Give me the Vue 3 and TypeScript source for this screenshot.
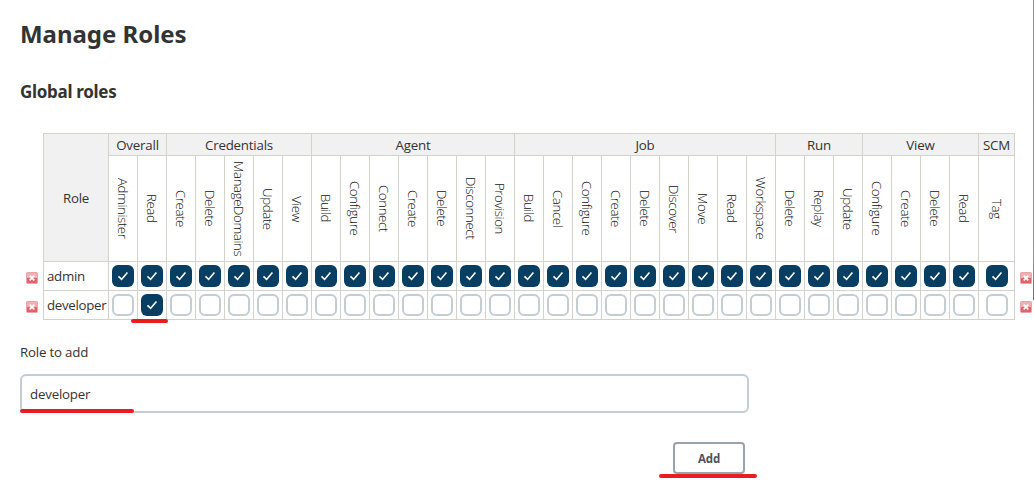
<script setup lang="ts">
import { reactive, ref } from 'vue'

interface Group {
  name: string
  permissions: string[]
}

interface Role {
  name: string
  granted: boolean[]
}

const groups: Group[] = [
  { name: 'Overall', permissions: ['Administer', 'Read'] },
  { name: 'Credentials', permissions: ['Create', 'Delete', 'ManageDomains', 'Update', 'View'] },
  { name: 'Agent', permissions: ['Build', 'Configure', 'Connect', 'Create', 'Delete', 'Disconnect', 'Provision'] },
  { name: 'Job', permissions: ['Build', 'Cancel', 'Configure', 'Create', 'Delete', 'Discover', 'Move', 'Read', 'Workspace'] },
  { name: 'Run', permissions: ['Delete', 'Replay', 'Update'] },
  { name: 'View', permissions: ['Configure', 'Create', 'Delete', 'Read'] },
  { name: 'SCM', permissions: ['Tag'] },
]
const permissions = groups.flatMap((g) => g.permissions)

const roles = reactive<Role[]>([
  { name: 'admin', granted: permissions.map(() => true) },
  { name: 'developer', granted: permissions.map((_, i) => i === 1) },
])
const newRole = ref('developer')

function toggle(role: Role, i: number) {
  role.granted[i] = !role.granted[i]
}
function remove(i: number) {
  roles.splice(i, 1)
}
function add() {
  const name = newRole.value.trim()
  if (name && !roles.some((r) => r.name === name)) {
    roles.push({ name, granted: permissions.map(() => false) })
  }
}
</script>

<template>
  <main class="page">
    <h1>Manage Roles</h1>
    <h2>Global roles</h2>

    <div class="matrix">
      <div class="icons">
        <button v-for="(role, r) in roles" :key="role.name" class="remove" @click="remove(r)">
          <svg viewBox="0 0 12 12"><rect class="tile" x=".5" y=".5" width="11" height="11" rx=".8" /><path class="shade" d="M1 6h10v5H1z" /><path class="cross" d="M3.7 3.7l4.6 4.6M8.3 3.7L3.7 8.3" /></svg>
        </button>
      </div>
      <div class="grid">
        <div class="cell head role-head">Role</div>
        <div v-for="g in groups" :key="g.name" class="cell head" :style="{ gridColumn: `span ${g.permissions.length}` }">{{ g.name }}</div>
        <div v-for="(p, i) in permissions" :key="i" class="cell perm"><span>{{ p }}</span></div>
        <template v-for="role in roles" :key="role.name">
          <div class="cell name">{{ role.name }}</div>
          <div v-for="(on, i) in role.granted" :key="i" class="cell">
            <button class="box" :class="{ on }" @click="toggle(role, i)">
              <svg v-if="on" viewBox="0 0 22 22"><path d="M6.5 11.4l3.1 3L15.4 7.6" /></svg>
            </button>
          </div>
        </template>
      </div>
      <div class="icons right">
        <button v-for="(role, r) in roles" :key="role.name" class="remove" @click="remove(r)">
          <svg viewBox="0 0 12 12"><rect class="tile" x=".5" y=".5" width="11" height="11" rx=".8" /><path class="shade" d="M1 6h10v5H1z" /><path class="cross" d="M3.7 3.7l4.6 4.6M8.3 3.7L3.7 8.3" /></svg>
        </button>
      </div>
      <i class="mark mark-read"></i>
    </div>

    <label for="role">Role to add</label>
    <div class="field">
      <input id="role" v-model="newRole" type="text" />
      <i class="mark mark-field"></i>
    </div>
    <div class="actions">
      <button class="add" @click="add">Add</button>
      <i class="mark mark-add"></i>
    </div>
    <i class="edge"></i>
  </main>
</template>

<style>
body {
  margin: 0;
  background: #fff;
}
</style>

<style scoped>
.page {
  position: relative;
  box-sizing: border-box;
  width: 1034px;
  height: 481px;
  padding-left: 20px;
  overflow: hidden;
  color: #333;
  font: 13.3px/20px "Open Sans", "Noto Sans", sans-serif;
  letter-spacing: -0.2px;
}
h1 {
  margin: 0;
  padding-top: 18px;
  font-family: "Noto Sans", sans-serif;
  font-size: 24px;
  line-height: 32px;
  font-weight: 700;
  letter-spacing: -0.03px;
}
h2 {
  margin: 30px 0 0;
  font-family: "Noto Sans", sans-serif;
  font-size: 17px;
  line-height: 24px;
  font-weight: 700;
  letter-spacing: -0.3px;
}
.matrix {
  position: relative;
  display: flex;
  margin-top: 29px;
  height: 187px;
}
.icons {
  flex: none;
  display: flex;
  flex-direction: column;
  width: 23px;
  padding-top: 139px;
  gap: 17px;
  box-sizing: border-box;
  padding-left: 6px;
}
.icons.right {
  padding-left: 5px;
}
button {
  display: block;
  box-sizing: border-box;
  margin: 0;
  padding: 0;
  border: 0;
  background: none;
  font-family: inherit;
}
svg {
  display: block;
  width: 100%;
  height: 100%;
}
.remove {
  width: 12px;
  height: 12px;
}
.tile {
  fill: #f0b0b3;
  stroke: #e6a6a9;
}
.shade {
  fill: #e0484e;
  opacity: 0.75;
}
.cross {
  fill: none;
  stroke: #fff;
  stroke-width: 1.8;
}
.grid {
  flex: none;
  display: grid;
  grid-template-columns: 65px repeat(30, 29px) 36px;
  grid-template-rows: 22px 106px;
  grid-auto-rows: 29px;
  box-sizing: border-box;
  width: 972px;
  height: 187px;
  border-right: 1px solid #d3d3cd;
  border-bottom: 1px solid #d3d3cd;
}
.cell {
  display: flex;
  align-items: center;
  justify-content: center;
  min-width: 0;
  box-sizing: border-box;
  border-top: 1px solid #d3d3cd;
  border-left: 1px solid #d3d3cd;
}
.head {
  background: #f1f1f1;
}
.role-head {
  grid-row: span 2;
}
.name {
  justify-content: flex-start;
  padding-left: 3px;
  letter-spacing: -0.3px;
}
.perm span {
  writing-mode: vertical-rl;
  color: #111;
  font-weight: 300;
  font-size: 13.3px;
  line-height: 20px;
  letter-spacing: -0.42px;
  white-space: nowrap;
}
.box {
  width: 22px;
  height: 22px;
  border: 2px solid #c3cdd2;
  border-radius: 6px;
  background: #fff;
}
.box.on {
  border: 0;
  background: #083e61;
}
.box path {
  fill: none;
  stroke: #fff;
  stroke-width: 1.6;
}
label {
  display: block;
  margin-top: 22px;
}
.field {
  position: relative;
  width: 729px;
  margin-top: 12px;
}
input {
  display: block;
  box-sizing: border-box;
  width: 729px;
  height: 39px;
  padding: 0 8px;
  border: 2px solid #c3cdd2;
  border-radius: 6px;
  outline: 0;
  background: #fff;
  color: #333;
  font: inherit;
  letter-spacing: -0.2px;
}
.actions {
  position: relative;
  display: flex;
  justify-content: flex-end;
  width: 725px;
  margin-top: 29px;
}
.add {
  width: 72px;
  height: 32px;
  padding-top: 1px;
  border: 2px solid #98a4ad;
  border-radius: 4px;
  color: #4d545d;
  font-size: 11.5px;
  line-height: 20px;
  font-weight: 700;
  letter-spacing: -0.1px;
}
.mark {
  position: absolute;
  height: 4px;
  border-radius: 2px;
  background: #ea1c20;
}
.mark-read {
  left: 111px;
  top: 186px;
  width: 37px;
}
.mark-field {
  left: 0;
  top: 35px;
  width: 114px;
}
.mark-add {
  left: 639px;
  top: 32px;
  width: 98px;
}
.edge {
  position: absolute;
  top: 0;
  right: 0;
  width: 1px;
  height: 300px;
  background: linear-gradient(#8f8f91, #98989a 85%, #6c6a70);
}
</style>
